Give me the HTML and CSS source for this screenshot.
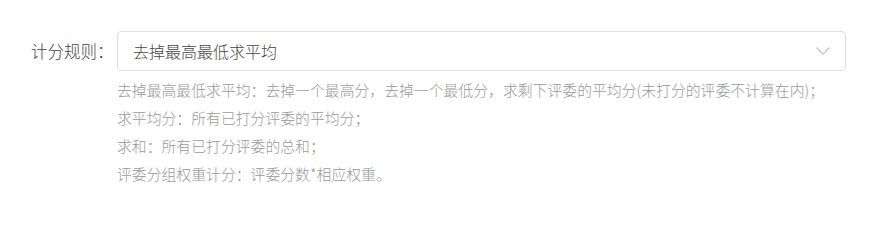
FILE: index.html
```html
<!DOCTYPE html>
<html lang="zh-CN">
<head>
<meta charset="utf-8">
<link rel="stylesheet" href="styles.css">
</head>
<body>
<div class="form-row">
  <label class="label">计分规则：</label>
  <div class="field">
    <div class="select">
      <span class="select-value">去掉最高最低求平均</span>
      <svg class="chevron" width="14" height="8" viewBox="0 0 14 8"><path d="M0.5 0.5 L7 7.2 L13.5 0.5" fill="none" stroke="#c0c4cc" stroke-width="1.1"/></svg>
    </div>
    <div class="help">
      <p>去掉最高最低求平均：去掉一个最高分，去掉一个最低分，求剩下评委的平均分(未打分的评委不计算在内)；</p>
      <p>求平均分：所有已打分评委的平均分；</p>
      <p>求和：所有已打分评委的总和；</p>
      <p>评委分组权重计分：评委分数*相应权重。</p>
    </div>
  </div>
</div>
</body>
</html>
```

FILE: styles.css
```css
html, body {
  margin: 0;
  padding: 0;
  background: #fff;
}
body {
  font-family: "Noto Sans CJK SC", "Noto Sans", sans-serif;
  font-weight: 300;
}
.form-row {
  display: flex;
  align-items: flex-start;
  padding: 31px 0 0 31px;
}
.label {
  width: 86px;
  flex: none;
  height: 40px;
  line-height: 40px;
  font-size: 16.5px;
  color: #444;
}
.field {
  width: 729px;
}
.select {
  box-sizing: border-box;
  height: 40px;
  border: 1px solid #dcdfe6;
  border-radius: 4px;
  display: flex;
  align-items: center;
  justify-content: space-between;
  padding: 0 15px 0 15px;
}
.select-value {
  font-size: 16px;
  color: #444;
}
.chevron {
  display: block;
}
.help {
  margin-top: 5px;
}
.help p {
  margin: 0;
  font-size: 14.85px;
  line-height: 28px;
  color: #999;
  white-space: nowrap;
}
```
